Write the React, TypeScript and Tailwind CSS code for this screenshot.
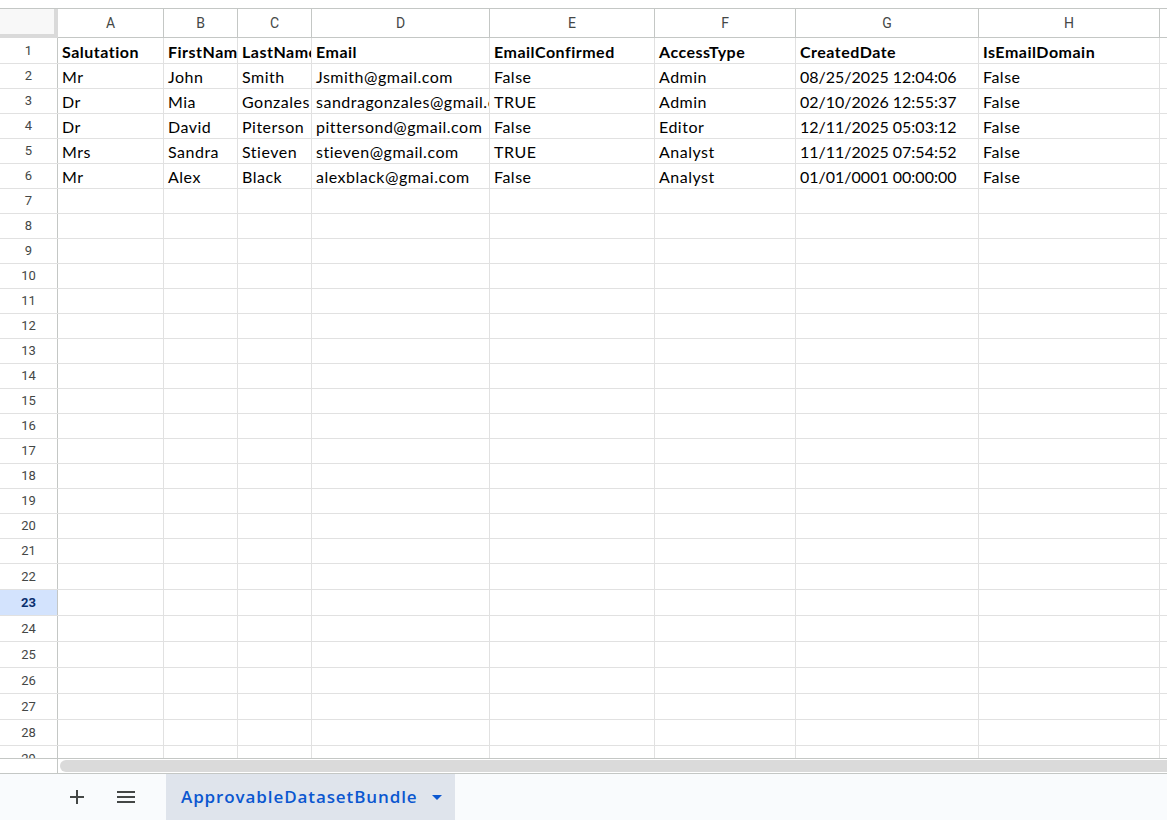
import React from "react";

const colW = [106, 74, 74, 178, 165, 141, 183, 181];
const letters = ["A", "B", "C", "D", "E", "F", "G", "H"];

const data: string[][] = [
  ["Salutation", "FirstName", "LastName", "Email", "EmailConfirmed", "AccessType", "CreatedDate", "IsEmailDomain"],
  ["Mr", "John", "Smith", "Jsmith@gmail.com", "False", "Admin", "08/25/2025 12:04:06", "False"],
  ["Dr", "Mia", "Gonzales", "sandragonzales@gmail.com", "TRUE", "Admin", "02/10/2026 12:55:37", "False"],
  ["Dr", "David", "Piterson", "pittersond@gmail.com", "False", "Editor", "12/11/2025 05:03:12", "False"],
  ["Mrs", "Sandra", "Stieven", "stieven@gmail.com", "TRUE", "Analyst", "11/11/2025 07:54:52", "False"],
  ["Mr", "Alex", "Black", "alexblack@gmai.com", "False", "Analyst", "01/01/0001 00:00:00", "False"],
];

function rowHeight(n: number) {
  if (n === 1) return 26;
  if (n >= 22) return 26;
  return 25;
}

export default function App() {
  const rows = Array.from({ length: 29 }, (_, i) => i + 1);
  return (
    <div
      className="w-[1167px] h-[820px] bg-white overflow-hidden flex flex-col"
      style={{ fontFamily: "Lato, 'Liberation Sans', sans-serif" }}
    >
      <div className="h-[8px] shrink-0 bg-white" />
      <div className="h-[750px] shrink-0 overflow-hidden flex flex-col">
        {/* column header */}
        <div className="flex h-[30px] shrink-0 border-t border-b border-[#c4c7c5] box-border">
          <div className="w-[58px] shrink-0 bg-[#f8f8f8] border-r-[4px] border-b-[4px] border-[#dadada] box-border -mb-[1px]" />
          {letters.map((l, i) => (
            <div
              key={l}
              className="shrink-0 border-r border-[#c4c7c5] flex items-center justify-center text-[14px] text-[#444746]"
              style={{ width: colW[i], fontFamily: "Roboto, sans-serif" }}
            >
              {l}
            </div>
          ))}
          <div className="flex-1" />
        </div>
        {rows.map((n) => {
          const r = data[n - 1];
          const sel = n === 23;
          return (
            <div key={n} className="flex shrink-0 border-b border-[#e1e1e1] box-border" style={{ height: rowHeight(n) }}>
              <div
                className={
                  "w-[58px] shrink-0 border-r border-[#c4c7c5] flex items-center justify-center text-[13px] " +
                  (sel ? "bg-[#d3e3fd] text-[#0a2f6e] font-bold" : "text-[#444746]")
                }
                style={{ fontFamily: "Roboto, sans-serif" }}
              >
                {n}
              </div>
              {colW.map((w, i) => (
                <div
                  key={i}
                  className={
                    "shrink-0 border-r border-[#e1e1e1] flex items-center pl-[4px] pt-[2px] overflow-hidden whitespace-nowrap text-[16px] text-black " +
                    (n === 1 ? "font-bold " : "") +
                    (i === 6 && n > 1 ? "tracking-normal" : "tracking-[0.5px]")
                  }
                  style={{ width: w }}
                >
                  {r ? r[i] : ""}
                </div>
              ))}
              <div className="flex-1" />
            </div>
          );
        })}
      </div>
      {/* scrollbar */}
      <div className="h-[16px] shrink-0 flex border-t border-b border-[#c4c7c5] box-border">
        <div className="w-[58px] shrink-0 border-r border-[#c4c7c5]" />
        <div className="flex-1 pl-[2px] pt-[1px]">
          <div className="h-[12px] bg-[#dadada] rounded-l-full" />
        </div>
      </div>
      {/* bottom bar */}
      <div className="h-[46px] shrink-0 bg-[#f9fbfd] flex">
        <div className="w-[166px] shrink-0 flex items-center">
          <svg width="14" height="14" viewBox="0 0 14 14" className="ml-[70px]">
            <path d="M7 0v14M0 7h14" stroke="#444746" strokeWidth="2" fill="none" />
          </svg>
          <svg width="18" height="12" viewBox="0 0 18 12" className="ml-[33px]">
            <path d="M0 1h18M0 6h18M0 11h18" stroke="#444746" strokeWidth="2" fill="none" />
          </svg>
        </div>
        <div className="w-[289px] shrink-0 bg-[#dfe4ec] flex items-center pl-[15px]">
          <span
            className="text-[17px] font-semibold text-[#0b57d0] tracking-[0.9px]"
            style={{ fontFamily: "'Open Sans', sans-serif" }}
          >
            ApprovableDatasetBundle
          </span>
          <svg width="10" height="5" viewBox="0 0 10 5" className="ml-[14px]">
            <path d="M0 0h10L5 5z" fill="#0b57d0" />
          </svg>
        </div>
        <div className="flex-1" />
      </div>
    </div>
  );
}
